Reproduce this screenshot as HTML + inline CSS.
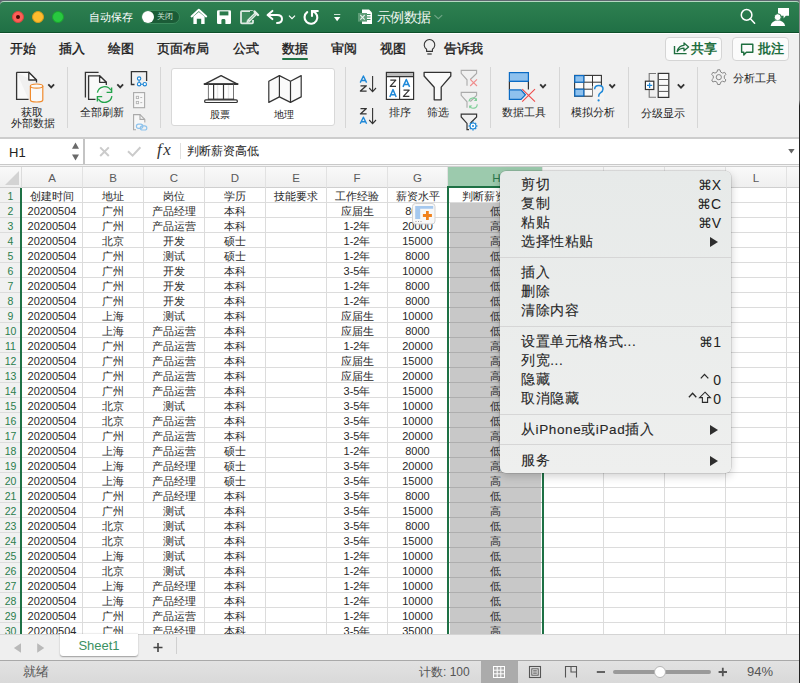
<!DOCTYPE html><html><head><meta charset="utf-8"><style>
*{box-sizing:border-box}
html,body{margin:0;padding:0}
body{width:800px;height:683px;overflow:hidden;position:relative;background:#f0f0f0;font-family:"Liberation Sans",sans-serif;color:#222}
.a{position:absolute}
/* title bar */
#tline{position:absolute;left:0;top:0;width:800px;height:6px;background:#5f6670}
#title{position:absolute;left:0;top:1px;width:800px;height:32px;background:linear-gradient(#2e8051,#207045);border-top:1px solid #b5d8c2;border-bottom:1px solid #0d4f2a;border-top-left-radius:4px;border-top-right-radius:4px}
#wline{position:absolute;left:0;top:33px;width:800px;height:1px;background:#fff}
.tl{position:absolute;top:11px;width:12px;height:12px;border-radius:50%}
.ttxt{position:absolute;color:#fff;font-size:11px;line-height:14px;white-space:nowrap}
/* ribbon */
.tab{position:absolute;top:40px;font-size:13px;line-height:18px;color:#1a1a1a;font-weight:500;-webkit-text-stroke-width:0.35px;white-space:nowrap}
.sep{position:absolute;top:67px;width:1px;height:61px;background:#d6d6d6}
.rl{position:absolute;font-size:11px;line-height:12px;color:#1f1f1f;text-align:center;white-space:nowrap}
#rbot{position:absolute;left:0;top:137px;width:800px;height:2px;background:#cdcdcd}
/* formula bar */
#fbar{position:absolute;left:0;top:139px;width:800px;height:25px;background:#fff}
#fb1{position:absolute;left:0;top:164px;width:800px;height:1px;background:#c9c9c9}
#fb2{position:absolute;left:0;top:165px;width:800px;height:1px;background:#f4f4f4}
#fb3{position:absolute;left:0;top:166px;width:800px;height:1px;background:#cfcfcf}
/* grid */
#grid{position:absolute;left:0;top:0;width:800px;height:683px}
.hdrrow{position:absolute;left:0;top:167px;width:800px;height:21px;background:linear-gradient(#f9f9f9,#efefef);border-bottom:1px solid #cfcfcf}
.corner{position:absolute;left:5px;top:171px;width:0;height:0;border-style:solid;border-width:0 0 14px 14px;border-color:transparent transparent #d3d3d3 transparent}
.ch{position:absolute;top:167px;height:20px;line-height:23px;text-align:center;font-size:11.5px;color:#5a5a5a}
.ch.sel{background:#9ccaad;color:#2a7a4c;height:21px;padding-left:3px}
.vl{position:absolute;top:167px;width:1px;height:467px;background:#dcdcdc}
.hl{position:absolute;left:0;width:799px;height:1px;background:#dcdcdc}
.rh{position:absolute;left:0;width:21px;height:14px;line-height:16px;text-align:center;font-size:10.5px;color:#2a7d4c;background:#f1f1f1}
.c{position:absolute;height:14px;line-height:17px;text-align:center;font-size:11px;color:#2a2a2a;white-space:nowrap;overflow:hidden}
.hfill{position:absolute;background:#c8c8c8}
.selL{position:absolute;left:447px;top:186px;width:2px;height:448px;background:#1e7145}
.selR{position:absolute;left:542px;top:186px;width:2px;height:448px;background:#1e7145}
.selT{position:absolute;left:447px;top:186px;width:97px;height:2px;background:#1e7145}
.rowsel{position:absolute;left:20px;top:188px;width:2px;height:446px;background:#1e7145}
/* bottom */
#tabbar{position:absolute;left:0;top:634px;width:800px;height:26px;background:#efefef;border-top:1px solid #d4d4d4}
#status{position:absolute;left:0;top:660px;width:800px;height:23px;background:linear-gradient(#e2e2e2,#d9d9d9);border-top:1px solid #a9a9a9}
/* menu */
#menu{position:absolute;left:500px;top:171px;width:231px;height:302px;background:linear-gradient(#e7eae9,#eeefee);border-radius:6px;box-shadow:0 0 0 0.5px rgba(0,0,0,.18),0 3px 10px rgba(0,0,0,.2)}
.mi{position:absolute;left:21px;font-size:13.5px;letter-spacing:0.6px;line-height:16px;color:#262626;-webkit-text-stroke-width:0.1px;white-space:nowrap}
.ms{position:absolute;right:10px;font-size:14px;line-height:16px;color:#222;white-space:nowrap;text-align:right}
.arr{position:absolute;left:210px;width:0;height:0;border-style:solid;border-width:5px 0 5px 8.5px;border-color:transparent transparent transparent #2e2e2e}
.msep{position:absolute;left:0;width:231px;height:1px;background:#d6d6d6}

.cellbg{position:absolute;left:0;top:187px;width:799px;height:447px;background:#fff}
#redge{position:absolute;left:799px;top:0;width:1px;height:683px;background:linear-gradient(#8a8a8a 0,#8a8a8a 100px,#222 106px,#222 100%)}
.hl2{position:absolute;left:449px;width:93px;height:1px;background:#aeaeae}
.vlh{position:absolute;top:167px;width:1px;height:20px;background:#e2e2e2}

</style></head><body>
<div id="tline"></div>
<div id="title"></div>
<div id="wline"></div>
<div class="tl" style="left:12px;background:#fe5f57;border:1px solid #d9453e"><div style="position:absolute;left:3px;top:3px;width:4px;height:4px;border-radius:50%;background:#4a0a06"></div></div>
<div class="tl" style="left:32px;background:#febc2e;border:1px solid #d79b1a"></div>
<div class="tl" style="left:52px;background:#28c840;border:1px solid #1aa32e"></div>
<div class="ttxt" style="left:89px;top:10px">自动保存</div>
<div class="a" style="left:141px;top:10px;width:39px;height:14px;border-radius:7px;background:#1b5c37;border:1px solid #3a8a5c"></div>
<div class="a" style="left:142px;top:11px;width:12px;height:12px;border-radius:50%;background:#fff"></div>
<div class="ttxt" style="left:157px;top:11px;font-size:8px;line-height:12px;color:#cfe5d7">关闭</div>
<div class="ttxt" style="left:377px;top:10px;font-size:13.5px;letter-spacing:-0.6px;line-height:16px;color:#eef5f0">示例数据</div>
<!-- tabs -->
<div class="tab" style="left:10px">开始</div>
<div class="tab" style="left:59px">插入</div>
<div class="tab" style="left:108px">绘图</div>
<div class="tab" style="left:157px">页面布局</div>
<div class="tab" style="left:233px">公式</div>
<div class="tab" style="left:282px">数据</div>
<div class="a" style="left:282px;top:58px;width:26px;height:2px;background:#217346;border-radius:1px"></div>
<div class="tab" style="left:331px">审阅</div>
<div class="tab" style="left:380px">视图</div>
<div class="tab" style="left:444px">告诉我</div>
<div class="a" style="left:665px;top:37px;width:57px;height:24px;border:1px solid #d5d5d5;border-radius:4px;background:#fbfbfb"></div>
<div class="tab" style="left:691px;color:#1e6e3f;font-weight:700;-webkit-text-stroke-width:0">共享</div>
<div class="a" style="left:732px;top:37px;width:57px;height:24px;border:1px solid #d5d5d5;border-radius:4px;background:#fbfbfb"></div>
<div class="tab" style="left:758px;color:#1e6e3f;font-weight:700;-webkit-text-stroke-width:0">批注</div>
<!-- ribbon separators -->
<div class="sep" style="left:67px"></div>
<div class="sep" style="left:160px"></div>
<div class="sep" style="left:345px"></div>
<div class="sep" style="left:490px"></div>
<div class="sep" style="left:559px"></div>
<div class="sep" style="left:628px"></div>
<div class="sep" style="left:697px"></div>
<!-- ribbon labels -->
<div class="rl" style="left:11px;top:106px;width:42px">获取</div>
<div class="rl" style="left:11px;top:117px;width:42px">外部数据</div>
<div class="rl" style="left:77px;top:106px;width:50px">全部刷新</div>
<div class="a" style="left:171px;top:68px;width:164px;height:58px;background:#fff;border:1px solid #d8d8d8;border-radius:3px"></div>
<div class="rl" style="left:200px;top:109px;width:40px;font-size:10px">股票</div>
<div class="rl" style="left:264px;top:109px;width:40px;font-size:10px">地理</div>
<div class="rl" style="left:380px;top:106px;width:40px">排序</div>
<div class="rl" style="left:418px;top:106px;width:40px">筛选</div>
<div class="rl" style="left:499px;top:106px;width:50px">数据工具</div>
<div class="rl" style="left:568px;top:106px;width:50px">模拟分析</div>
<div class="rl" style="left:638px;top:107px;width:50px">分级显示</div>
<div class="rl" style="left:733px;top:72px;text-align:left">分析工具</div>
<div id="rbot"></div>
<!-- formula bar -->
<div id="fbar"></div>
<div class="a" style="left:83px;top:139px;width:2px;height:25px;background:#c4c4c4"></div>
<div class="a" style="left:9px;top:145px;font-size:13px;line-height:16px;color:#222">H1</div>
<div class="a" style="left:187px;top:143px;font-size:12px;line-height:16px;color:#222">判断薪资高低</div>
<div class="a" style="left:180px;top:143px;width:1px;height:16px;background:#e0e0e0"></div>
<div id="fb1"></div><div id="fb2"></div><div id="fb3"></div>
<svg class="a" style="left:0;top:0" width="800" height="683" viewBox="0 0 800 683" fill="none">
<!-- title bar icons -->
<path d="M191.6 16.4 L198.8 9.8 L206.2 16.4" stroke="#fff" stroke-width="2" stroke-linecap="round" stroke-linejoin="round"/>
<path d="M193.4 16.6 L198.8 12 L204.6 16.6 V24 H201.2 V18.8 H196.8 V24 H193.4 Z" fill="#fff"/>
<path d="M218.2 10.2 H229.8 Q231 10.2 231 11.4 V22.8 Q231 24 229.8 24 H218.2 Q217 24 217 22.8 V11.4 Q217 10.2 218.2 10.2 Z" fill="#fff"/>
<rect x="219.6" y="11.4" width="8.8" height="4" fill="#2a7a4b"/>
<path d="M221.4 24 V20.4 Q221.4 19 222.8 19 H224 Q225.4 19 225.4 20.4 V24 Z" fill="#2a7a4b"/>
<rect x="241" y="11.2" width="12" height="12.2" rx="0.8" stroke="#dfe9e3" stroke-width="1.8" fill="#3d8a5d"/><path d="M250 11 L257 11 L257 20 L250 20 Z" fill="#2a7a4c"/>
<path d="M248.2 21.2 L256 13.4" stroke="#e6efe9" stroke-width="3.2"/><path d="M249.6 19.8 L255 14.4" stroke="#3d8a5d" stroke-width="0.7"/><path d="M254.6 11.6 L258 15" stroke="#e6efe9" stroke-width="2.4" stroke-linecap="round"/><path d="M246.4 23 L247 19.8 L249.6 22.4 Z" fill="#e6efe9"/>
<g stroke="#fff" stroke-width="2" stroke-linecap="round" stroke-linejoin="round">
 <path d="M272.4 10.9 L267.6 15 L272.4 19.1 M268 15 H277 Q282 15 282 19 Q282 23 277 23"/>
</g>
<path d="M289 15.6 L292 18.6 L295 15.6" stroke="#fff" stroke-width="1.2"/>
<g stroke="#fff" stroke-width="2.1" stroke-linecap="round" fill="none">
 <path d="M307.2 12.2 A6.4 6.4 0 1 0 313.2 11.4"/>
 <path d="M312 16 V11 H317.8"/>
</g>
<path d="M334 14.5 H340.3" stroke="#cfe2d6" stroke-width="1"/>
<path d="M334 17 H340.3 L337.15 21.2 Z" fill="#fff"/>
<!-- excel doc -->
<path d="M362 9.6 H369 L372 12.6 V24 H362 Z" fill="#fff"/>
<path d="M366 14.5 H370.5 M366 17 H370.5 M366 19.5 H370.5" stroke="#3b8a5e" stroke-width="1"/>
<rect x="358" y="13" width="9" height="8.6" fill="#5e9d78"/>
<path d="M360.3 15 L364.7 19.6 M364.7 15 L360.3 19.6" stroke="#e7f1eb" stroke-width="1.1"/>
<path d="M434.4 15.1 L438.3 18.7 L442.2 15.1" stroke="#6fa585" stroke-width="1.2"/>
<!-- search & person -->
<circle cx="746.6" cy="14.9" r="5.3" stroke="#fff" stroke-width="1.5"/>
<path d="M750.4 18.8 L754.6 23.2" stroke="#fff" stroke-width="1.6" stroke-linecap="round"/>
<g fill="#fff">
 <path d="M778 7.9 H789 V15.8 H785.8 L783.6 18.6 V15.8 H778 Z"/>
 <circle cx="777.7" cy="17.2" r="3.5" stroke="#2a7a4c" stroke-width="1"/>
 <path d="M770.6 25.9 Q771.6 20.4 777.8 20.4 Q784 20.4 785.2 25.9 Z"/>
</g>
<!-- tell me bulb -->
<path d="M426.6 49.2 A5.3 5.3 0 1 1 432.4 49.2 V51.4 H426.6 Z" stroke="#333" stroke-width="1.1" stroke-linejoin="round"/>
<path d="M427.3 54 H431.7" stroke="#333" stroke-width="1.2"/>
<!-- share icon -->
<path d="M674.5 46 V53.6 H686.6" stroke="#1e6e3f" stroke-width="1.4"/>
<path d="M677.2 51.5 Q678.6 45.5 684 45.4 V43 L688.6 46.9 L684 50.8 V48.2 Q679.8 48.2 677.2 51.5 Z" stroke="#1e6e3f" stroke-width="1.3" stroke-linejoin="round"/>
<!-- comment icon -->
<path d="M741.6 44.3 H752.8 V52.2 H746.4 L743.8 55 V52.2 H741.6 Z" stroke="#1e6e3f" stroke-width="1.4" stroke-linejoin="round"/>

<!-- ribbon: get external data -->
<path d="M16.6 72.3 H28.8 L36.5 80 V82.6 M28.6 99.4 H16.6 V72.3" stroke="#333" stroke-width="1.3" fill="#f9f9f9"/>
<path d="M28.8 72.3 V80 H36.5 Z" stroke="#333" stroke-width="1.3" fill="#fff" stroke-linejoin="round"/>
<path d="M30.4 86.1 V100 A6.2 2 0 0 0 42.8 100 V86.1" stroke="#f08b2d" stroke-width="1.2" fill="#f9f9f9"/>
<ellipse cx="36.6" cy="86.1" rx="6.2" ry="2.1" stroke="#f08b2d" stroke-width="1.2" fill="#f9f9f9"/>
<path d="M48.3 84.4 L51.2 87.4 L54.1 84.4" stroke="#333" stroke-width="1.8"/>
<!-- refresh all -->
<path d="M85.4 97.6 V72.3 H98.6" stroke="#333" stroke-width="1.3"/>
<path d="M95.5 99.4 H88.6 V75.8 H99.6 L106.3 82.3 V85" stroke="#333" stroke-width="1.3" fill="#f9f9f9"/>
<path d="M99.6 75.8 V82.3 H106.3 Z" stroke="#333" stroke-width="1.3" fill="#fff" stroke-linejoin="round"/>
<g stroke="#22a34a" stroke-width="1.3" fill="none">
 <path d="M97.4 92.6 A7.3 7.3 0 0 1 110.8 90.2"/>
 <path d="M111.9 96.2 A7.3 7.3 0 0 1 98.4 98.8"/>
</g>
<path d="M111.6 87.6 V92.4 H106.6 M97.4 101.6 V96.6 H102.2" stroke="#22a34a" stroke-width="1.4"/>
<path d="M117.3 84.4 L120.2 87.4 L123.1 84.4" stroke="#333" stroke-width="1.8"/>
<!-- small icons col -->
<path d="M134.5 84.5 H131.4 V71.6 H146.6 V81" stroke="#333" stroke-width="1.3"/>
<g stroke="#1d86d6" stroke-width="1.1" fill="#fff">
 <path d="M139.1 80.2 V82.3 M140.8 84.2 H143.2"/>
 <circle cx="139.1" cy="78.6" r="1.7"/>
 <circle cx="139.1" cy="84.2" r="1.7"/>
 <circle cx="144.8" cy="84.2" r="1.7"/>
</g>
<rect x="133.6" y="92.6" width="11" height="15.1" stroke="#a9a9a9" stroke-width="1.1" fill="#f7f7f7"/>
<rect x="136.3" y="96.3" width="2.3" height="2.3" stroke="#b3b3b3" stroke-width="0.9"/>
<rect x="136.3" y="101.4" width="2.3" height="2.3" stroke="#b3b3b3" stroke-width="0.9"/>
<path d="M140.3 97.5 H142.2 M140.3 102.6 H142.2" stroke="#b3b3b3" stroke-width="0.9"/>
<path d="M136 129.8 H133.6 V114.6 H140 L144.8 119.4 V122.6" stroke="#a9a9a9" stroke-width="1.1" fill="#f7f7f7"/>
<path d="M140 114.6 V119.4 H144.8" stroke="#a9a9a9" stroke-width="1.1"/>
<g stroke="#8fc3ec" stroke-width="1.2" fill="none">
 <rect x="136.4" y="124.2" width="6.4" height="4.2" rx="2.1"/>
 <rect x="140.4" y="125.8" width="6.4" height="4.2" rx="2.1"/>
</g>
<!-- bank -->
<path d="M204.6 84.1 L221.1 75.6 L237.5 84.1 Z" stroke="#333" stroke-width="1.3" fill="#fafafa" stroke-linejoin="round"/>
<path d="M204.3 84.1 H237.8" stroke="#333" stroke-width="1.6" stroke-linecap="round"/>
<path d="M208.4 84.5 V99.2 M233.5 84.5 V99.2" stroke="#777" stroke-width="1"/>
<path d="M213.6 84.5 V99.2 M223.5 84.5 V99.2" stroke="#333" stroke-width="1.2"/>
<path d="M217.5 85 V99 M228.5 85 V99" stroke="#e6e6e6" stroke-width="1.4"/>
<path d="M207.8 99.2 H234.2" stroke="#333" stroke-width="1.2"/>
<rect x="204.6" y="99.9" width="32.8" height="2.6" rx="1.3" stroke="#333" stroke-width="1.2" fill="#fafafa"/>
<!-- map -->
<path d="M268.8 81.3 L279.4 75.6 L290.5 81.3 L301.2 75.6 V96.9 L290.5 102.4 L279.4 96.9 L268.8 102.4 Z" stroke="#333" stroke-width="1.2" fill="#fafafa" stroke-linejoin="round"/>
<path d="M279.4 75.6 V96.9 M290.5 81.3 V102.4" stroke="#333" stroke-width="1.2"/>
<!-- sort az / za -->
<path d="M360.2 82.6 L363.40 76 L366.6 82.6 M361.35 80.49 H365.45" stroke="#1e88d8" stroke-width="1.4" stroke-linejoin="round"/><path d="M360.5 85.8 H366.40000000000003 L360.4 91.10000000000001 H366.6" stroke="#333" stroke-width="1.3" stroke-linejoin="round"/><path d="M360.5 108.6 H366.40000000000003 L360.4 113.9 H366.6" stroke="#333" stroke-width="1.3" stroke-linejoin="round"/><path d="M360.2 123.8 L363.40 117.2 L366.6 123.8 M361.35 121.69 H365.45" stroke="#1e88d8" stroke-width="1.4" stroke-linejoin="round"/>
<path d="M372.6 76 V91.4 M369.2 88 L372.6 91.6 L376 88" stroke="#333" stroke-width="1.1"/>
<path d="M372.6 108 V123.4 M369.2 120 L372.6 123.6 L376 120" stroke="#333" stroke-width="1.1"/>
<!-- sort box -->
<rect x="386.4" y="72.4" width="27.2" height="27" stroke="#333" stroke-width="1.2" fill="#fff"/>
<rect x="387" y="73" width="26" height="3.4" fill="#bdbdbd"/>
<path d="M386.4 76.6 H413.6 M399.6 76.6 V99.4" stroke="#333" stroke-width="1.1"/>
<path d="M390.3 80.19999999999999 H395.8 L390.2 86.30000000000001 H396" stroke="#333" stroke-width="1.2" stroke-linejoin="round"/><path d="M389.8 97 L393.00 89.6 L396.2 97 M390.95 94.63 H395.05" stroke="#1e88d8" stroke-width="1.5" stroke-linejoin="round"/><path d="M403 86.9 L406.30 79.5 L409.6 86.9 M404.19 84.53 H408.41" stroke="#1e88d8" stroke-width="1.5" stroke-linejoin="round"/><path d="M403.5 90.19999999999999 H409.2 L403.4 96.4 H409.4" stroke="#333" stroke-width="1.2" stroke-linejoin="round"/>
<!-- funnel -->
<path d="M424.1 72.4 H450.8 V76 L441.2 87.2 V99.8 H434.2 V87.2 L424.1 76 Z" stroke="#333" stroke-width="1.3" fill="#fafafa" stroke-linejoin="round"/>
<!-- small filters -->
<path d="M470.3 79.5 L476.6 73.4 V70.4 H461.2 V73.4 L467 79.8 V85.8" stroke="#aaa" stroke-width="1.1"/>
<path d="M470.2 79.4 L477 86 M477 79.4 L470.2 86" stroke="#f08b8b" stroke-width="1.1"/>
<path d="M470.3 101.5 L476.6 95.4 V92.4 H461.2 V95.4 L467 101.8 V107.8" stroke="#aaa" stroke-width="1.1"/>
<g stroke="#7fcf98" stroke-width="1.1"><path d="M469 101.5 A4 4 0 0 1 476.6 100.2"/><path d="M477.2 104.2 A4 4 0 0 1 469.6 106"/></g>
<path d="M477 97.8 V101 H473.8 Z M469.2 108.6 V105.4 H472.4 Z" fill="#7fcf98"/>
<path d="M470.5 123 L476.6 117 V114.2 H461.2 V117 L467 123.4 V129.6 H469" stroke="#333" stroke-width="1.2"/>
<g stroke="#1e88d8" stroke-width="1.1" fill="#fff">
 <circle cx="473" cy="126" r="3"/>
</g>
<circle cx="473" cy="126" r="1" fill="#1e88d8"/>
<path d="M473 121.6 V122.8 M473 129.2 V130.4 M468.6 126 H469.8 M476.2 126 H477.4 M469.9 122.9 L470.7 123.7 M475.3 128.3 L476.1 129.1 M469.9 129.1 L470.7 128.3 M475.3 123.7 L476.1 122.9" stroke="#1e88d8" stroke-width="1.4"/>
<!-- data tools -->
<rect x="509.4" y="72.6" width="19" height="8.8" fill="#8ec1ee" stroke="#0b6bc4" stroke-width="1.2"/>
<path d="M509.4 81.4 V89.8 M528.4 81.4 V89.6" stroke="#333" stroke-width="1.2"/>
<path d="M509.4 81.4 H528.4" stroke="#0b6bc4" stroke-width="1.2"/>
<path d="M509.4 89.9 H521 L525.4 94.8 L521 99.4 H509.4 Z" fill="#8ec1ee" stroke="#0b6bc4" stroke-width="1.2" stroke-linejoin="miter"/>
<path d="M522.2 89.2 L535 101.7 M535 89.2 L522.2 101.7" stroke="#ee4b4b" stroke-width="1.1"/>
<path d="M540.2 84.4 L543 87.4 L545.8 84.4" stroke="#333" stroke-width="1.8"/>
<!-- what-if -->
<rect x="574.6" y="75.4" width="26.8" height="20.8" fill="#fafafa" stroke="#333" stroke-width="1.1"/>
<path d="M583.8 75.4 V96.2 M592.5 75.4 V96.2 M574.6 82.2 H601.4 M574.6 89.2 H601.4" stroke="#333" stroke-width="1"/>
<rect x="574.8" y="75.6" width="9" height="6.6" fill="#8ec1ee" stroke="#0b6bc4" stroke-width="1.2"/>
<rect x="574.8" y="89.2" width="9" height="6.8" fill="#8ec1ee" stroke="#0b6bc4" stroke-width="1.2"/>
<path d="M592.6 86 L604 86 V101.8 H592.6 Z" fill="#f3f3f3" stroke="none"/>
<path d="M594.6 89.2 Q594.8 85.6 598.8 85.6 Q603 85.6 603 89 Q603 91.4 600.4 92.8 Q598.6 93.8 598.6 96.8" stroke="#1e88d8" stroke-width="1.5" fill="none"/>
<circle cx="598.6" cy="100.4" r="1.1" fill="#1e88d8"/>
<path d="M609.4 84.4 L612.2 87.4 L615 84.4" stroke="#333" stroke-width="1.8"/>
<!-- outline -->
<path d="M656 73.5 H649.2 V81 M649.2 89.6 V97.3 H656" stroke="#777" stroke-width="1.1"/>
<rect x="645.4" y="81.2" width="8.4" height="8.3" fill="#fff" stroke="#333" stroke-width="1.2"/>
<path d="M649.6 82.8 V88 M647 85.4 H652.2" stroke="#1e88d8" stroke-width="1.3"/>
<rect x="658.2" y="73.4" width="10.6" height="24" fill="#fafafa" stroke="#333" stroke-width="1.2"/>
<path d="M658.2 79.5 H668.8 M658.2 85.4 H668.8 M658.2 91.4 H668.8" stroke="#555" stroke-width="1"/>
<path d="M677.8 84.3 L681 87.6 L684.2 84.3" stroke="#333" stroke-width="1.8"/>
<!-- gear -->
<path d="M717.6 69.8 H720 L720.6 72 L722.6 73.1 L724.7 72.3 L725.9 74.4 L724.3 76 V78.3 L725.9 79.9 L724.7 82 L722.6 81.2 L720.6 82.3 L720 84.5 H717.6 L717 82.3 L715 81.2 L712.9 82 L711.7 79.9 L713.3 78.3 V76 L711.7 74.4 L712.9 72.3 L715 73.1 L717 72 Z" stroke="#888" stroke-width="1" stroke-linejoin="round"/>
<circle cx="718.8" cy="77.15" r="2.6" stroke="#888" stroke-width="1"/>
<!-- formula bar glyphs -->
<path d="M72 148.8 L75.5 142.4 L79 148.8 Z M72 154.4 H79 L75.5 160.4 Z" fill="#6a6a6a"/>
<path d="M100.2 147.4 L108.8 156 M108.8 147.4 L100.2 156" stroke="#cbcbcb" stroke-width="2"/>
<path d="M128 151.2 L132.6 155.6 L140.4 147.2" stroke="#cbcbcb" stroke-width="2"/>
<path d="M788.2 149 H794.6 L791.4 153.6 Z" fill="#666"/>
</svg>
<div class="a" style="left:157px;top:140px;font-family:'Liberation Serif',serif;font-style:italic;font-size:17px;line-height:20px;color:#333;letter-spacing:1.6px">fx</div>
<div id="grid"><div class="cellbg"></div><div class="hdrrow"></div><div class="corner"></div><div class="ch" style="left:22px;width:60px">A</div><div class="ch" style="left:83px;width:60px">B</div><div class="ch" style="left:144px;width:60px">C</div><div class="ch" style="left:205px;width:60px">D</div><div class="ch" style="left:266px;width:60px">E</div><div class="ch" style="left:327px;width:60px">F</div><div class="ch" style="left:388px;width:59px">G</div><div class="ch sel" style="left:448px;width:94px">H</div><div class="ch" style="left:543px;width:60px">I</div><div class="ch" style="left:604px;width:60px">J</div><div class="ch" style="left:665px;width:60px">K</div><div class="ch" style="left:726px;width:60px">L</div><div class="vl" style="left:21px;height:21px"></div><div class="vlh" style="left:82px"></div><div class="vl" style="left:82px;top:187px;height:447px"></div><div class="vlh" style="left:143px"></div><div class="vl" style="left:143px;top:187px;height:447px"></div><div class="vlh" style="left:204px"></div><div class="vl" style="left:204px;top:187px;height:447px"></div><div class="vlh" style="left:265px"></div><div class="vl" style="left:265px;top:187px;height:447px"></div><div class="vlh" style="left:326px"></div><div class="vl" style="left:326px;top:187px;height:447px"></div><div class="vlh" style="left:387px"></div><div class="vl" style="left:387px;top:187px;height:447px"></div><div class="vlh" style="left:447px"></div><div class="vl" style="left:447px;top:187px;height:447px"></div><div class="vlh" style="left:542px"></div><div class="vl" style="left:542px;top:187px;height:447px"></div><div class="vlh" style="left:603px"></div><div class="vl" style="left:603px;top:187px;height:447px"></div><div class="vlh" style="left:664px"></div><div class="vl" style="left:664px;top:187px;height:447px"></div><div class="vlh" style="left:725px"></div><div class="vl" style="left:725px;top:187px;height:447px"></div><div class="vlh" style="left:786px"></div><div class="vl" style="left:786px;top:187px;height:447px"></div><div class="hl" style="top:202px"></div><div class="hl" style="top:217px"></div><div class="hl" style="top:232px"></div><div class="hl" style="top:247px"></div><div class="hl" style="top:262px"></div><div class="hl" style="top:277px"></div><div class="hl" style="top:292px"></div><div class="hl" style="top:307px"></div><div class="hl" style="top:322px"></div><div class="hl" style="top:337px"></div><div class="hl" style="top:352px"></div><div class="hl" style="top:367px"></div><div class="hl" style="top:382px"></div><div class="hl" style="top:397px"></div><div class="hl" style="top:412px"></div><div class="hl" style="top:427px"></div><div class="hl" style="top:442px"></div><div class="hl" style="top:457px"></div><div class="hl" style="top:472px"></div><div class="hl" style="top:487px"></div><div class="hl" style="top:502px"></div><div class="hl" style="top:517px"></div><div class="hl" style="top:532px"></div><div class="hl" style="top:547px"></div><div class="hl" style="top:562px"></div><div class="hl" style="top:577px"></div><div class="hl" style="top:592px"></div><div class="hl" style="top:607px"></div><div class="hl" style="top:622px"></div><div class="hl" style="top:637px"></div><div class="hfill" style="left:450px;top:203px;width:91px;height:14px"></div><div class="hl2" style="top:217px"></div><div class="hfill" style="left:450px;top:218px;width:91px;height:14px"></div><div class="hl2" style="top:232px"></div><div class="hfill" style="left:450px;top:233px;width:91px;height:14px"></div><div class="hl2" style="top:247px"></div><div class="hfill" style="left:450px;top:248px;width:91px;height:14px"></div><div class="hl2" style="top:262px"></div><div class="hfill" style="left:450px;top:263px;width:91px;height:14px"></div><div class="hl2" style="top:277px"></div><div class="hfill" style="left:450px;top:278px;width:91px;height:14px"></div><div class="hl2" style="top:292px"></div><div class="hfill" style="left:450px;top:293px;width:91px;height:14px"></div><div class="hl2" style="top:307px"></div><div class="hfill" style="left:450px;top:308px;width:91px;height:14px"></div><div class="hl2" style="top:322px"></div><div class="hfill" style="left:450px;top:323px;width:91px;height:14px"></div><div class="hl2" style="top:337px"></div><div class="hfill" style="left:450px;top:338px;width:91px;height:14px"></div><div class="hl2" style="top:352px"></div><div class="hfill" style="left:450px;top:353px;width:91px;height:14px"></div><div class="hl2" style="top:367px"></div><div class="hfill" style="left:450px;top:368px;width:91px;height:14px"></div><div class="hl2" style="top:382px"></div><div class="hfill" style="left:450px;top:383px;width:91px;height:14px"></div><div class="hl2" style="top:397px"></div><div class="hfill" style="left:450px;top:398px;width:91px;height:14px"></div><div class="hl2" style="top:412px"></div><div class="hfill" style="left:450px;top:413px;width:91px;height:14px"></div><div class="hl2" style="top:427px"></div><div class="hfill" style="left:450px;top:428px;width:91px;height:14px"></div><div class="hl2" style="top:442px"></div><div class="hfill" style="left:450px;top:443px;width:91px;height:14px"></div><div class="hl2" style="top:457px"></div><div class="hfill" style="left:450px;top:458px;width:91px;height:14px"></div><div class="hl2" style="top:472px"></div><div class="hfill" style="left:450px;top:473px;width:91px;height:14px"></div><div class="hl2" style="top:487px"></div><div class="hfill" style="left:450px;top:488px;width:91px;height:14px"></div><div class="hl2" style="top:502px"></div><div class="hfill" style="left:450px;top:503px;width:91px;height:14px"></div><div class="hl2" style="top:517px"></div><div class="hfill" style="left:450px;top:518px;width:91px;height:14px"></div><div class="hl2" style="top:532px"></div><div class="hfill" style="left:450px;top:533px;width:91px;height:14px"></div><div class="hl2" style="top:547px"></div><div class="hfill" style="left:450px;top:548px;width:91px;height:14px"></div><div class="hl2" style="top:562px"></div><div class="hfill" style="left:450px;top:563px;width:91px;height:14px"></div><div class="hl2" style="top:577px"></div><div class="hfill" style="left:450px;top:578px;width:91px;height:14px"></div><div class="hl2" style="top:592px"></div><div class="hfill" style="left:450px;top:593px;width:91px;height:14px"></div><div class="hl2" style="top:607px"></div><div class="hfill" style="left:450px;top:608px;width:91px;height:14px"></div><div class="hl2" style="top:622px"></div><div class="hfill" style="left:450px;top:623px;width:91px;height:14px"></div><div class="hl2" style="top:637px"></div><div class="rh" style="top:188px">1</div><div class="rh" style="top:203px">2</div><div class="rh" style="top:218px">3</div><div class="rh" style="top:233px">4</div><div class="rh" style="top:248px">5</div><div class="rh" style="top:263px">6</div><div class="rh" style="top:278px">7</div><div class="rh" style="top:293px">8</div><div class="rh" style="top:308px">9</div><div class="rh" style="top:323px">10</div><div class="rh" style="top:338px">11</div><div class="rh" style="top:353px">12</div><div class="rh" style="top:368px">13</div><div class="rh" style="top:383px">14</div><div class="rh" style="top:398px">15</div><div class="rh" style="top:413px">16</div><div class="rh" style="top:428px">17</div><div class="rh" style="top:443px">18</div><div class="rh" style="top:458px">19</div><div class="rh" style="top:473px">20</div><div class="rh" style="top:488px">21</div><div class="rh" style="top:503px">22</div><div class="rh" style="top:518px">23</div><div class="rh" style="top:533px">24</div><div class="rh" style="top:548px">25</div><div class="rh" style="top:563px">26</div><div class="rh" style="top:578px">27</div><div class="rh" style="top:593px">28</div><div class="rh" style="top:608px">29</div><div class="rh" style="top:623px">30</div><div class="c" style="left:22px;top:188px;width:60px">创建时间</div><div class="c" style="left:83px;top:188px;width:60px">地址</div><div class="c" style="left:144px;top:188px;width:60px">岗位</div><div class="c" style="left:205px;top:188px;width:60px">学历</div><div class="c" style="left:266px;top:188px;width:60px">技能要求</div><div class="c" style="left:327px;top:188px;width:60px">工作经验</div><div class="c" style="left:388px;top:188px;width:59px">薪资水平</div><div class="c" style="left:448px;top:188px;width:94px">判断薪资高低</div><div class="c" style="left:22px;top:203px;width:60px">20200504</div><div class="c" style="left:83px;top:203px;width:60px">广州</div><div class="c" style="left:144px;top:203px;width:60px">产品经理</div><div class="c" style="left:205px;top:203px;width:60px">本科</div><div class="c" style="left:327px;top:203px;width:60px">应届生</div><div class="c" style="left:388px;top:203px;width:59px">8000</div><div class="c" style="left:448px;top:203px;width:94px">低</div><div class="c" style="left:22px;top:218px;width:60px">20200504</div><div class="c" style="left:83px;top:218px;width:60px">广州</div><div class="c" style="left:144px;top:218px;width:60px">产品运营</div><div class="c" style="left:205px;top:218px;width:60px">本科</div><div class="c" style="left:327px;top:218px;width:60px">1-2年</div><div class="c" style="left:388px;top:218px;width:59px">20000</div><div class="c" style="left:448px;top:218px;width:94px">高</div><div class="c" style="left:22px;top:233px;width:60px">20200504</div><div class="c" style="left:83px;top:233px;width:60px">北京</div><div class="c" style="left:144px;top:233px;width:60px">开发</div><div class="c" style="left:205px;top:233px;width:60px">硕士</div><div class="c" style="left:327px;top:233px;width:60px">1-2年</div><div class="c" style="left:388px;top:233px;width:59px">15000</div><div class="c" style="left:448px;top:233px;width:94px">高</div><div class="c" style="left:22px;top:248px;width:60px">20200504</div><div class="c" style="left:83px;top:248px;width:60px">广州</div><div class="c" style="left:144px;top:248px;width:60px">测试</div><div class="c" style="left:205px;top:248px;width:60px">硕士</div><div class="c" style="left:327px;top:248px;width:60px">1-2年</div><div class="c" style="left:388px;top:248px;width:59px">8000</div><div class="c" style="left:448px;top:248px;width:94px">低</div><div class="c" style="left:22px;top:263px;width:60px">20200504</div><div class="c" style="left:83px;top:263px;width:60px">广州</div><div class="c" style="left:144px;top:263px;width:60px">开发</div><div class="c" style="left:205px;top:263px;width:60px">本科</div><div class="c" style="left:327px;top:263px;width:60px">3-5年</div><div class="c" style="left:388px;top:263px;width:59px">10000</div><div class="c" style="left:448px;top:263px;width:94px">低</div><div class="c" style="left:22px;top:278px;width:60px">20200504</div><div class="c" style="left:83px;top:278px;width:60px">广州</div><div class="c" style="left:144px;top:278px;width:60px">开发</div><div class="c" style="left:205px;top:278px;width:60px">本科</div><div class="c" style="left:327px;top:278px;width:60px">1-2年</div><div class="c" style="left:388px;top:278px;width:59px">8000</div><div class="c" style="left:448px;top:278px;width:94px">低</div><div class="c" style="left:22px;top:293px;width:60px">20200504</div><div class="c" style="left:83px;top:293px;width:60px">广州</div><div class="c" style="left:144px;top:293px;width:60px">开发</div><div class="c" style="left:205px;top:293px;width:60px">本科</div><div class="c" style="left:327px;top:293px;width:60px">1-2年</div><div class="c" style="left:388px;top:293px;width:59px">8000</div><div class="c" style="left:448px;top:293px;width:94px">低</div><div class="c" style="left:22px;top:308px;width:60px">20200504</div><div class="c" style="left:83px;top:308px;width:60px">上海</div><div class="c" style="left:144px;top:308px;width:60px">测试</div><div class="c" style="left:205px;top:308px;width:60px">本科</div><div class="c" style="left:327px;top:308px;width:60px">应届生</div><div class="c" style="left:388px;top:308px;width:59px">10000</div><div class="c" style="left:448px;top:308px;width:94px">低</div><div class="c" style="left:22px;top:323px;width:60px">20200504</div><div class="c" style="left:83px;top:323px;width:60px">上海</div><div class="c" style="left:144px;top:323px;width:60px">产品运营</div><div class="c" style="left:205px;top:323px;width:60px">本科</div><div class="c" style="left:327px;top:323px;width:60px">应届生</div><div class="c" style="left:388px;top:323px;width:59px">8000</div><div class="c" style="left:448px;top:323px;width:94px">低</div><div class="c" style="left:22px;top:338px;width:60px">20200504</div><div class="c" style="left:83px;top:338px;width:60px">广州</div><div class="c" style="left:144px;top:338px;width:60px">产品运营</div><div class="c" style="left:205px;top:338px;width:60px">本科</div><div class="c" style="left:327px;top:338px;width:60px">1-2年</div><div class="c" style="left:388px;top:338px;width:59px">20000</div><div class="c" style="left:448px;top:338px;width:94px">高</div><div class="c" style="left:22px;top:353px;width:60px">20200504</div><div class="c" style="left:83px;top:353px;width:60px">广州</div><div class="c" style="left:144px;top:353px;width:60px">产品运营</div><div class="c" style="left:205px;top:353px;width:60px">本科</div><div class="c" style="left:327px;top:353px;width:60px">应届生</div><div class="c" style="left:388px;top:353px;width:59px">15000</div><div class="c" style="left:448px;top:353px;width:94px">高</div><div class="c" style="left:22px;top:368px;width:60px">20200504</div><div class="c" style="left:83px;top:368px;width:60px">广州</div><div class="c" style="left:144px;top:368px;width:60px">产品运营</div><div class="c" style="left:205px;top:368px;width:60px">本科</div><div class="c" style="left:327px;top:368px;width:60px">应届生</div><div class="c" style="left:388px;top:368px;width:59px">20000</div><div class="c" style="left:448px;top:368px;width:94px">高</div><div class="c" style="left:22px;top:383px;width:60px">20200504</div><div class="c" style="left:83px;top:383px;width:60px">广州</div><div class="c" style="left:144px;top:383px;width:60px">产品运营</div><div class="c" style="left:205px;top:383px;width:60px">本科</div><div class="c" style="left:327px;top:383px;width:60px">3-5年</div><div class="c" style="left:388px;top:383px;width:59px">15000</div><div class="c" style="left:448px;top:383px;width:94px">高</div><div class="c" style="left:22px;top:398px;width:60px">20200504</div><div class="c" style="left:83px;top:398px;width:60px">北京</div><div class="c" style="left:144px;top:398px;width:60px">测试</div><div class="c" style="left:205px;top:398px;width:60px">本科</div><div class="c" style="left:327px;top:398px;width:60px">3-5年</div><div class="c" style="left:388px;top:398px;width:59px">10000</div><div class="c" style="left:448px;top:398px;width:94px">低</div><div class="c" style="left:22px;top:413px;width:60px">20200504</div><div class="c" style="left:83px;top:413px;width:60px">北京</div><div class="c" style="left:144px;top:413px;width:60px">产品运营</div><div class="c" style="left:205px;top:413px;width:60px">本科</div><div class="c" style="left:327px;top:413px;width:60px">3-5年</div><div class="c" style="left:388px;top:413px;width:59px">10000</div><div class="c" style="left:448px;top:413px;width:94px">低</div><div class="c" style="left:22px;top:428px;width:60px">20200504</div><div class="c" style="left:83px;top:428px;width:60px">广州</div><div class="c" style="left:144px;top:428px;width:60px">产品运营</div><div class="c" style="left:205px;top:428px;width:60px">本科</div><div class="c" style="left:327px;top:428px;width:60px">3-5年</div><div class="c" style="left:388px;top:428px;width:59px">20000</div><div class="c" style="left:448px;top:428px;width:94px">高</div><div class="c" style="left:22px;top:443px;width:60px">20200504</div><div class="c" style="left:83px;top:443px;width:60px">上海</div><div class="c" style="left:144px;top:443px;width:60px">产品运营</div><div class="c" style="left:205px;top:443px;width:60px">硕士</div><div class="c" style="left:327px;top:443px;width:60px">1-2年</div><div class="c" style="left:388px;top:443px;width:59px">8000</div><div class="c" style="left:448px;top:443px;width:94px">低</div><div class="c" style="left:22px;top:458px;width:60px">20200504</div><div class="c" style="left:83px;top:458px;width:60px">上海</div><div class="c" style="left:144px;top:458px;width:60px">产品经理</div><div class="c" style="left:205px;top:458px;width:60px">硕士</div><div class="c" style="left:327px;top:458px;width:60px">3-5年</div><div class="c" style="left:388px;top:458px;width:59px">20000</div><div class="c" style="left:448px;top:458px;width:94px">高</div><div class="c" style="left:22px;top:473px;width:60px">20200504</div><div class="c" style="left:83px;top:473px;width:60px">上海</div><div class="c" style="left:144px;top:473px;width:60px">产品经理</div><div class="c" style="left:205px;top:473px;width:60px">硕士</div><div class="c" style="left:327px;top:473px;width:60px">3-5年</div><div class="c" style="left:388px;top:473px;width:59px">15000</div><div class="c" style="left:448px;top:473px;width:94px">高</div><div class="c" style="left:22px;top:488px;width:60px">20200504</div><div class="c" style="left:83px;top:488px;width:60px">广州</div><div class="c" style="left:144px;top:488px;width:60px">产品经理</div><div class="c" style="left:205px;top:488px;width:60px">本科</div><div class="c" style="left:327px;top:488px;width:60px">3-5年</div><div class="c" style="left:388px;top:488px;width:59px">8000</div><div class="c" style="left:448px;top:488px;width:94px">低</div><div class="c" style="left:22px;top:503px;width:60px">20200504</div><div class="c" style="left:83px;top:503px;width:60px">广州</div><div class="c" style="left:144px;top:503px;width:60px">测试</div><div class="c" style="left:205px;top:503px;width:60px">本科</div><div class="c" style="left:327px;top:503px;width:60px">3-5年</div><div class="c" style="left:388px;top:503px;width:59px">15000</div><div class="c" style="left:448px;top:503px;width:94px">高</div><div class="c" style="left:22px;top:518px;width:60px">20200504</div><div class="c" style="left:83px;top:518px;width:60px">北京</div><div class="c" style="left:144px;top:518px;width:60px">测试</div><div class="c" style="left:205px;top:518px;width:60px">本科</div><div class="c" style="left:327px;top:518px;width:60px">3-5年</div><div class="c" style="left:388px;top:518px;width:59px">8000</div><div class="c" style="left:448px;top:518px;width:94px">低</div><div class="c" style="left:22px;top:533px;width:60px">20200504</div><div class="c" style="left:83px;top:533px;width:60px">北京</div><div class="c" style="left:144px;top:533px;width:60px">测试</div><div class="c" style="left:205px;top:533px;width:60px">本科</div><div class="c" style="left:327px;top:533px;width:60px">3-5年</div><div class="c" style="left:388px;top:533px;width:59px">15000</div><div class="c" style="left:448px;top:533px;width:94px">高</div><div class="c" style="left:22px;top:548px;width:60px">20200504</div><div class="c" style="left:83px;top:548px;width:60px">上海</div><div class="c" style="left:144px;top:548px;width:60px">测试</div><div class="c" style="left:205px;top:548px;width:60px">本科</div><div class="c" style="left:327px;top:548px;width:60px">1-2年</div><div class="c" style="left:388px;top:548px;width:59px">10000</div><div class="c" style="left:448px;top:548px;width:94px">低</div><div class="c" style="left:22px;top:563px;width:60px">20200504</div><div class="c" style="left:83px;top:563px;width:60px">北京</div><div class="c" style="left:144px;top:563px;width:60px">测试</div><div class="c" style="left:205px;top:563px;width:60px">本科</div><div class="c" style="left:327px;top:563px;width:60px">1-2年</div><div class="c" style="left:388px;top:563px;width:59px">10000</div><div class="c" style="left:448px;top:563px;width:94px">低</div><div class="c" style="left:22px;top:578px;width:60px">20200504</div><div class="c" style="left:83px;top:578px;width:60px">上海</div><div class="c" style="left:144px;top:578px;width:60px">产品经理</div><div class="c" style="left:205px;top:578px;width:60px">本科</div><div class="c" style="left:327px;top:578px;width:60px">1-2年</div><div class="c" style="left:388px;top:578px;width:59px">10000</div><div class="c" style="left:448px;top:578px;width:94px">低</div><div class="c" style="left:22px;top:593px;width:60px">20200504</div><div class="c" style="left:83px;top:593px;width:60px">上海</div><div class="c" style="left:144px;top:593px;width:60px">产品经理</div><div class="c" style="left:205px;top:593px;width:60px">本科</div><div class="c" style="left:327px;top:593px;width:60px">1-2年</div><div class="c" style="left:388px;top:593px;width:59px">10000</div><div class="c" style="left:448px;top:593px;width:94px">低</div><div class="c" style="left:22px;top:608px;width:60px">20200504</div><div class="c" style="left:83px;top:608px;width:60px">广州</div><div class="c" style="left:144px;top:608px;width:60px">产品运营</div><div class="c" style="left:205px;top:608px;width:60px">本科</div><div class="c" style="left:327px;top:608px;width:60px">1-2年</div><div class="c" style="left:388px;top:608px;width:59px">10000</div><div class="c" style="left:448px;top:608px;width:94px">低</div><div class="c" style="left:22px;top:623px;width:60px">20200504</div><div class="c" style="left:83px;top:623px;width:60px">广州</div><div class="c" style="left:144px;top:623px;width:60px">产品经理</div><div class="c" style="left:205px;top:623px;width:60px">本科</div><div class="c" style="left:327px;top:623px;width:60px">3-5年</div><div class="c" style="left:388px;top:623px;width:59px">35000</div><div class="c" style="left:448px;top:623px;width:94px">高</div><div class="selL"></div><div class="selR"></div><div class="selT"></div><div class="rowsel"></div></div><div id="tabbar"></div>
<div class="a" style="left:60px;top:634px;width:78px;height:22px;background:#fff;border-radius:0 0 3px 3px;box-shadow:0 0.5px 1.5px rgba(0,0,0,.35)"></div>
<div class="a" style="left:60px;top:638px;width:78px;text-align:center;font-size:13px;line-height:16px;color:#3a9162">Sheet1</div>
<div class="a" style="left:176px;top:637px;width:1px;height:17px;background:#d0d0d0"></div>
<div id="status"></div>
<div class="a" style="left:23px;top:664px;font-size:13px;line-height:16px;color:#555">就绪</div>
<div class="a" style="left:419px;top:664px;font-size:12px;line-height:16px;color:#555">计数: 100</div>
<div class="a" style="left:481px;top:661px;width:37px;height:22px;background:#ababab"></div>
<div class="a" style="left:747px;top:664px;font-size:13px;line-height:16px;color:#555">94%</div>
<div class="a" style="left:613px;top:670px;width:98px;height:4px;border-radius:2px;background:#9a9a9a"></div>
<div class="a" style="left:654px;top:666px;width:12px;height:12px;border-radius:50%;background:#fff;border:1px solid #b5b5b5"></div>
<svg class="a" style="left:0;top:0" width="800" height="683" viewBox="0 0 800 683" fill="none">
<path d="M21 643.2 L13.9 648 L21 652.8 Z M37.2 643.2 L44.3 648 L37.2 652.8 Z" fill="#b9b9b9"/>
<path d="M158 643 V652 M153.5 647.5 H162.5" stroke="#444" stroke-width="1.6"/>
<!-- status icons -->
<g stroke="#fff" stroke-width="1">
 <rect x="493.5" y="666.5" width="11" height="11"/>
 <path d="M497.2 666.5 V677.5 M500.8 666.5 V677.5 M493.5 670.2 H504.5 M493.5 673.8 H504.5"/>
</g>
<rect x="529.5" y="666.5" width="11" height="11" stroke="#555" stroke-width="1.1"/>
<rect x="531.8" y="668.8" width="6.4" height="6.4" stroke="#555" stroke-width="0.9"/>
<path d="M533.2 670.6 H536.8 M533.2 672 H536.8 M533.2 673.4 H536.8" stroke="#555" stroke-width="0.7"/>
<path d="M565.5 677.5 V666.5 H576.5 V677.5 M571 666.5 V672 H576.5" stroke="#555" stroke-width="1.1"/>
<path d="M596.8 672 H605" stroke="#555" stroke-width="1.8"/>
<path d="M718.6 672 H727 M722.8 667.8 V676.2" stroke="#555" stroke-width="1.8"/>
<!-- autofill icon -->
<rect x="412.5" y="203.5" width="22.5" height="20.5" rx="3" fill="#f8f8f8" stroke="#d3d3d3"/>
<path d="M415.2 206 H433.2 V208.8 H420.2 V219 H415.2 Z" fill="#a5c8ee"/>
<path d="M427.4 211 V220 M422.9 215.5 H431.9" stroke="#f0821e" stroke-width="2.8"/>
<path d="M415.5 221.5 H416.5 M418 221.5 H419 M420.5 221.5 H421.5" stroke="#999" stroke-width="0.9"/>
</svg>
<!-- context menu -->
<div id="menu">
<div class="mi" style="top:6px">剪切</div><div class="ms" style="top:6px">⌘X</div>
<div class="mi" style="top:25px">复制</div><div class="ms" style="top:25px">⌘C</div>
<div class="mi" style="top:44px">粘贴</div><div class="ms" style="top:44px">⌘V</div>
<div class="mi" style="top:63px">选择性粘贴</div><div class="arr" style="top:66px"></div>
<div class="msep" style="top:86px"></div>
<div class="mi" style="top:94px">插入</div>
<div class="mi" style="top:113px">删除</div>
<div class="mi" style="top:132px">清除内容</div>
<div class="msep" style="top:155px"></div>
<div class="mi" style="top:163px">设置单元格格式...</div><div class="ms" style="top:163px">⌘1</div>
<div class="mi" style="top:182px">列宽...</div>
<div class="mi" style="top:201px">隐藏</div><div class="ms" style="top:201px">0</div>
<div class="mi" style="top:220px">取消隐藏</div><div class="ms" style="top:220px">0</div>
<div class="msep" style="top:243px"></div>
<div class="mi" style="top:251px">从iPhone或iPad插入</div><div class="arr" style="top:254px"></div>
<div class="msep" style="top:273px"></div>
<div class="mi" style="top:282px">服务</div><div class="arr" style="top:285px"></div>
</div>
<svg class="a" style="left:0;top:0" width="800" height="683" fill="none">
<path d="M700.8 378.4 L704.5 374.4 L708.3 378.4" stroke="#2a2a2a" stroke-width="1.3"/>
<path d="M688.9 397.2 L692.6 393.2 L696.3 397.2" stroke="#2a2a2a" stroke-width="1.3"/>
<path d="M705 392.2 L710.4 397.6 H707.6 V402.4 H702.4 V397.6 H699.6 Z" stroke="#2a2a2a" stroke-width="1.1" stroke-linejoin="miter"/>
</svg>
<div id="redge"></div>
</body></html>
